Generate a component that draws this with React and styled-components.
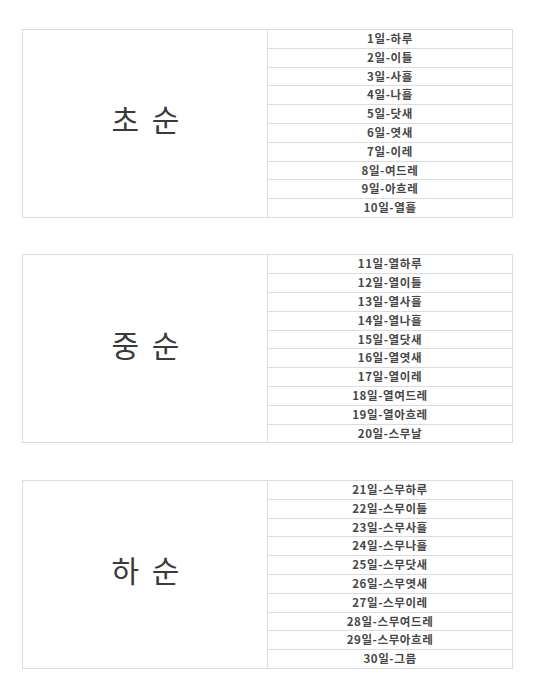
import React from "react";
import styled, { createGlobalStyle } from "styled-components";

const GlobalStyle = createGlobalStyle`
  body {
    margin: 0;
    background: #fff;
    font-family: "Noto Sans CJK KR", "Noto Sans", sans-serif;
  }
`;

const groups = [
  {
    title: "초 순",
    days: ["1일-하루", "2일-이틀", "3일-사흘", "4일-나흘", "5일-닷새", "6일-엿새", "7일-이레", "8일-여드레", "9일-아흐레", "10일-열흘"],
  },
  {
    title: "중 순",
    days: ["11일-열하루", "12일-열이틀", "13일-열사흘", "14일-열나흘", "15일-열닷새", "16일-열엿새", "17일-열이레", "18일-열여드레", "19일-열아흐레", "20일-스무날"],
  },
  {
    title: "하 순",
    days: ["21일-스무하루", "22일-스무이틀", "23일-스무사흘", "24일-스무나흘", "25일-스무닷새", "26일-스무엿새", "27일-스무이레", "28일-스무여드레", "29일-스무아흐레", "30일-그믐"],
  },
];

const Page = styled.div`
  padding: 29px 23px 0 22px;
  display: flex;
  flex-direction: column;
  gap: 36.5px;
`;

const Block = styled.div`
  display: grid;
  grid-template-columns: 245px 1fr;
  width: 491px;
  border: 1px solid #dcdcdc;
  box-sizing: border-box;
`;

const Label = styled.div`
  display: flex;
  align-items: center;
  justify-content: center;
  padding: 0 0 10px 4px;
  border-right: 1px solid #dcdcdc;
  font-size: 30px;
  color: #3a3a3a;
  letter-spacing: 3px;
  white-space: pre;
`;

const List = styled.div`
  display: flex;
  flex-direction: column;
`;

const Row = styled.div`
  height: 17.8px;
  line-height: 17.8px;
  text-align: center;
  font-size: 11.5px;
  font-weight: 700;
  color: #474747;
  letter-spacing: 0.6px;
  border-top: ${(p) => (p.first ? "none" : "1px solid #dcdcdc")};
`;

export default function App() {
  return (
    <>
      <GlobalStyle />
      <Page>
        {groups.map((g) => (
          <Block key={g.title}>
            <Label>{g.title}</Label>
            <List>
              {g.days.map((d, i) => (
                <Row key={d} first={i === 0}>
                  {d}
                </Row>
              ))}
            </List>
          </Block>
        ))}
      </Page>
    </>
  );
}
